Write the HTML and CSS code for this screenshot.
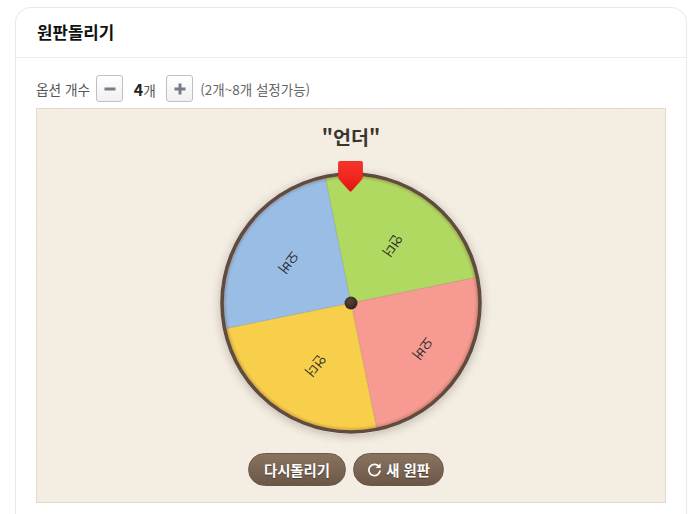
FILE: index.html
```html
<!DOCTYPE html>
<html lang="ko">
<head>
    <meta charset="UTF-8">
    <title>원판돌리기</title>
    <link rel="stylesheet" href="styles.css">
</head>
<body>
    <div class="card">
        <h2 class="card-title">원판돌리기</h2>
        <div class="card-body">
            <!-- Option count -->
            <div class="option-row">
                <span class="option-label">옵션 개수</span>
                <button class="step-btn">
                    <svg class="step-icon" viewBox="0 0 12 12"><rect x="0.5" y="4.5" width="11" height="3"/></svg>
                </button>
                <span class="option-count"><b>4</b>개</span>
                <button class="step-btn">
                    <svg class="step-icon" viewBox="0 0 12 12"><rect x="0.5" y="4.5" width="11" height="3"/><rect x="4.5" y="0.5" width="3" height="11"/></svg>
                </button>
                <span class="option-hint">(2개~8개 설정가능)</span>
            </div>

            <!-- Wheel -->
            <div class="stage">
                <div class="result">"언더"</div>
                <div class="wheel-box">
                    <svg class="wheel" viewBox="1 1 262 262">
                        <defs>
                            <filter id="soft" x="-5%" y="-5%" width="110%" height="110%">
                                <feGaussianBlur stdDeviation="1.3"/>
                            </filter>
                            <clipPath id="disc"><circle cx="132" cy="132" r="128"/></clipPath>
                            <linearGradient id="pinFill" x1="0" y1="0" x2="0" y2="1">
                                <stop offset="0" stop-color="#f6332c"/>
                                <stop offset="0.5" stop-color="#f2281f"/>
                                <stop offset="1" stop-color="#df140e"/>
                            </linearGradient>
                            <radialGradient id="hub" cx="0.4" cy="0.35" r="0.7">
                                <stop offset="0" stop-color="#57443a"/>
                                <stop offset="1" stop-color="#2f211a"/>
                            </radialGradient>
                        </defs>
                        <path d="M132 132 L106.3 6.6 A128 128 0 0 0 6.6 157.7 Z" fill="#9abde6"/>
                        <path d="M132 132 L106.3 6.6 A128 128 0 0 1 257.4 106.3 Z" fill="#b0d962"/>
                        <path d="M132 132 L257.4 106.3 A128 128 0 0 1 157.7 257.4 Z" fill="#f69a92"/>
                        <path d="M132 132 L157.7 257.4 A128 128 0 0 1 6.6 157.7 Z" fill="#f8cf4a"/>
                        <g stroke="#000" stroke-opacity="0.13" stroke-width="1">
                            <line x1="132" y1="132" x2="106.3" y2="6.6"/>
                            <line x1="132" y1="132" x2="257.4" y2="106.3"/>
                            <line x1="132" y1="132" x2="157.7" y2="257.4"/>
                            <line x1="132" y1="132" x2="6.6" y2="157.7"/>
                        </g>
                        <g clip-path="url(#disc)">
                            <circle cx="132" cy="132" r="127" fill="none" stroke="#7a4a30" stroke-opacity="0.3" stroke-width="3" filter="url(#soft)"/>
                        </g>
                        <circle cx="132" cy="132" r="129" fill="none" stroke="#5f4c3e" stroke-width="3.6"/>
                        <g class="wheel-label">
                            <text transform="translate(70 92) rotate(128)">오버</text>
                            <text transform="translate(174 75) rotate(125)">언더</text>
                            <text transform="translate(204 178) rotate(128)">오버</text>
                            <text transform="translate(97 195) rotate(130)">언더</text>
                        </g>
                        <circle cx="132" cy="132" r="6.5" fill="url(#hub)"/>
                    </svg>
                    <svg class="pin" viewBox="0 0 25 31">
                        <path d="M2.5 0 H22.5 Q24.8 0 24.8 2.5 V15 Q24.8 17.5 23 19.3 L13.6 29.8 Q12.5 31 11.4 29.8 L2 19.3 Q0.2 17.5 0.2 15 V2.5 Q0.2 0 2.5 0 Z" fill="url(#pinFill)" stroke="#d0201a" stroke-width="0.5"/>
                    </svg>
                </div>
                <div class="actions">
                    <button class="pill-btn">다시돌리기</button>
                    <button class="pill-btn pill-new">
                        <svg class="reload" viewBox="0 0 16 16"><path d="M12.6 4.6 A6 6 0 1 0 14 9" fill="none" stroke="#fff" stroke-width="1.8"/><path d="M14.5 1.2 V6.4 H9.3 Z" fill="#fff"/></svg>
                        새 원판
                    </button>
                </div>
            </div>
        </div>
    </div>
</body>
</html>
```
FILE: styles.css
```css
* { box-sizing: border-box; }
html, body { height: 100%; }
body { margin: 0; overflow: hidden; background: #fff; font-family: "Noto Sans CJK KR", "Noto Sans", sans-serif; color: #333; }
.card { margin: 7px 10px 0 15px; height: calc(100% - 7px); border: 1px solid #e9e9e9; border-bottom: none; border-radius: 16px 16px 0 0; }
.card-title { margin: 0; height: 50px; padding: 0 21px; line-height: 49px; font-size: 16.8px; font-weight: 700; color: #111; border-bottom: 1px solid #eee; }
.card-body { padding: 17px 20px 0; }
.option-row { display: flex; align-items: center; height: 27px; font-size: 13.7px; color: #555; }
.option-label { margin-right: 6px; }
.step-btn { display: flex; align-items: center; justify-content: center; width: 27px; height: 27px; padding: 0; border: 1px solid #bcc0c7; border-radius: 3px; background: linear-gradient(#fff, #f0f0f2); }
.step-icon { width: 12px; height: 12px; fill: #767c88; }
.option-count { width: 43px; text-align: center; font-size: 13.7px; color: #555; }
.option-count b { font-size: 16px; color: #222; }
.option-hint { margin-left: 7px; font-size: 13.5px; color: #666; }
.stage { margin-top: 6px; height: 395px; width: 630px; border: 1px solid #e2d9cb; background: #f3ece1 repeating-linear-gradient(45deg, transparent 0 1px, rgba(255, 255, 255, 0.12) 1px 2px); text-align: center; }
.result { margin-top: 15px; height: 26px; line-height: 26px; font-size: 19.5px; font-weight: 700; color: #3b332c; }
.wheel-box { position: relative; width: 262px; height: 262px; margin: 22px auto 0; border-radius: 50%; box-shadow: 0 2px 10px rgba(80, 60, 40, 0.3); }
.wheel { display: block; width: 262px; height: 262px; }
.wheel-label { font-size: 13px; text-anchor: middle; dominant-baseline: central; fill: #2b2b2b; }
.pin { position: absolute; left: 118px; top: -11px; width: 25px; height: 31px; }
.actions { display: flex; justify-content: center; gap: 7px; margin-top: 19px; padding-right: 10px; }
.pill-btn { display: flex; align-items: center; justify-content: center; gap: 4px; height: 33px; width: 98px; padding: 0; border: 1px solid #6b5847; border-radius: 17px; background: linear-gradient(#8a7260, #6c5747); color: #fff; font-family: inherit; font-size: 14.4px; font-weight: 700; text-shadow: 0 1px 1px rgba(0, 0, 0, 0.4); }
.pill-new { width: 91px; }
.reload { width: 15px; height: 15px; }
```
